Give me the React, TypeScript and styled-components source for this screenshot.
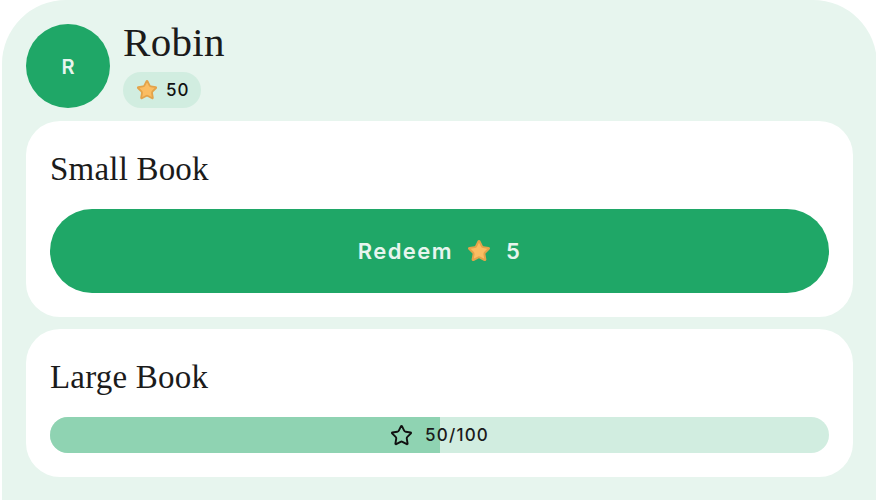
import React from "react";
import styled, { createGlobalStyle } from "styled-components";

const GlobalStyle = createGlobalStyle`
  html, body {
    margin: 0;
    padding: 0;
    background: #ffffff;
    overflow: hidden;
  }
  body {
    font-family: "Inter", "Noto Sans", sans-serif;
    color: #1b1b1b;
  }
`;

const Panel = styled.div`
  box-sizing: border-box;
  margin-left: 2px;
  width: 875px;
  min-height: 520px;
  background: #e7f5ee;
  border-radius: 64px 64px 0 0;
  padding: 24px;
  display: flex;
  flex-direction: column;
`;

const Header = styled.div`
  display: flex;
  align-items: stretch;
  gap: 13px;
  margin-bottom: 13px;
`;

const Avatar = styled.div`
  width: 84px;
  height: 84px;
  border-radius: 50%;
  background: #1fa767;
  color: #e7f5ee;
  display: flex;
  align-items: center;
  justify-content: center;
  font-family: "Inter", sans-serif;
  font-weight: 600;
  font-size: 20px;
  padding-top: 2px;
  box-sizing: border-box;
`;

const Info = styled.div`
  display: flex;
  flex-direction: column;
  justify-content: space-between;
  align-items: flex-start;
`;

const Name = styled.div`
  font-family: "Liberation Serif", serif;
  font-size: 41px;
  line-height: 36px;
  letter-spacing: 0.3px;
  color: #1b1b1b;
`;

const Badge = styled.div`
  display: flex;
  align-items: center;
  gap: 8px;
  height: 36px;
  box-sizing: border-box;
  padding: 0 12px 0 13px;
  border-radius: 18px;
  background: #d1ede0;
  font-family: "Inter", sans-serif;
  font-weight: 500;
  font-size: 17px;
  letter-spacing: 1px;
  color: #111;
`;

const Cards = styled.div`
  display: flex;
  flex-direction: column;
  gap: 12px;
`;

const Card = styled.div`
  background: #ffffff;
  border-radius: 34px;
  padding: 24px;
  display: flex;
  flex-direction: column;
  gap: 16px;
`;

const CardTitle = styled.div`
  font-family: "Liberation Serif", serif;
  font-size: 33px;
  line-height: 48px;
  letter-spacing: 0.2px;
  color: #1b1b1b;
`;

const RedeemButton = styled.button`
  height: 84px;
  border: none;
  border-radius: 42px;
  background: #1fa767;
  color: #e7f5ee;
  display: flex;
  align-items: center;
  justify-content: center;
  gap: 14px;
  font-family: "Inter", sans-serif;
  font-weight: 600;
  font-size: 22px;
  letter-spacing: 1.4px;
  cursor: pointer;
`;

const Amount = styled.span`
  margin-left: 1px;
`;

const Track = styled.div`
  position: relative;
  height: 36px;
  border-radius: 18px;
  background: #d1ede0;
  overflow: hidden;
`;

const Fill = styled.div`
  position: absolute;
  left: 0;
  top: 0;
  bottom: 0;
  background: #8fd3b2;
`;

const TrackLabel = styled.div`
  position: relative;
  height: 100%;
  display: flex;
  align-items: center;
  justify-content: center;
  gap: 12px;
  font-family: "Inter", sans-serif;
  font-weight: 500;
  font-size: 17px;
  letter-spacing: 1.2px;
  color: #1b1b1b;
`;

const STAR =
  "M11.525 2.295a.53.53 0 0 1 .95 0l2.31 4.679a2.123 2.123 0 0 0 1.595 1.16l5.166.756a.53.53 0 0 1 .294.904l-3.736 3.638a2.123 2.123 0 0 0-.611 1.878l.882 5.14a.53.53 0 0 1-.771.56l-4.618-2.428a2.122 2.122 0 0 0-1.973 0L6.396 21.01a.53.53 0 0 1-.77-.56l.881-5.139a2.122 2.122 0 0 0-.611-1.879L2.16 9.795a.53.53 0 0 1 .294-.906l5.165-.755a2.122 2.122 0 0 0 1.597-1.16z";

const FilledStar = ({ size }: { size: number }) => (
  <svg width={size} height={size} viewBox="0 0 24 24">
    <path
      d={STAR}
      fill="#fbbd62"
      stroke="#e3a34a"
      strokeWidth={2}
      strokeLinejoin="round"
    />
  </svg>
);

const OutlineStar = ({ size }: { size: number }) => (
  <svg width={size} height={size} viewBox="0 0 24 24">
    <path
      d={STAR}
      fill="none"
      stroke="#111"
      strokeWidth={2}
      strokeLinejoin="round"
    />
  </svg>
);

export default function App() {
  const progress = 50;
  const goal = 100;
  return (
    <>
      <GlobalStyle />
      <Panel>
        <Header>
          <Avatar>R</Avatar>
          <Info>
            <Name>Robin</Name>
            <Badge>
              <FilledStar size={22} />
              <span>50</span>
            </Badge>
          </Info>
        </Header>
        <Cards>
          <Card>
            <CardTitle>Small Book</CardTitle>
            <RedeemButton>
              <span>Redeem</span>
              <FilledStar size={24} />
              <Amount>5</Amount>
            </RedeemButton>
          </Card>
          <Card>
            <CardTitle>Large Book</CardTitle>
            <Track>
              <Fill style={{ width: `${(progress / goal) * 100}%` }} />
              <TrackLabel>
                <OutlineStar size={23} />
                <span>
                  {progress}/{goal}
                </span>
              </TrackLabel>
            </Track>
          </Card>
        </Cards>
      </Panel>
    </>
  );
}
